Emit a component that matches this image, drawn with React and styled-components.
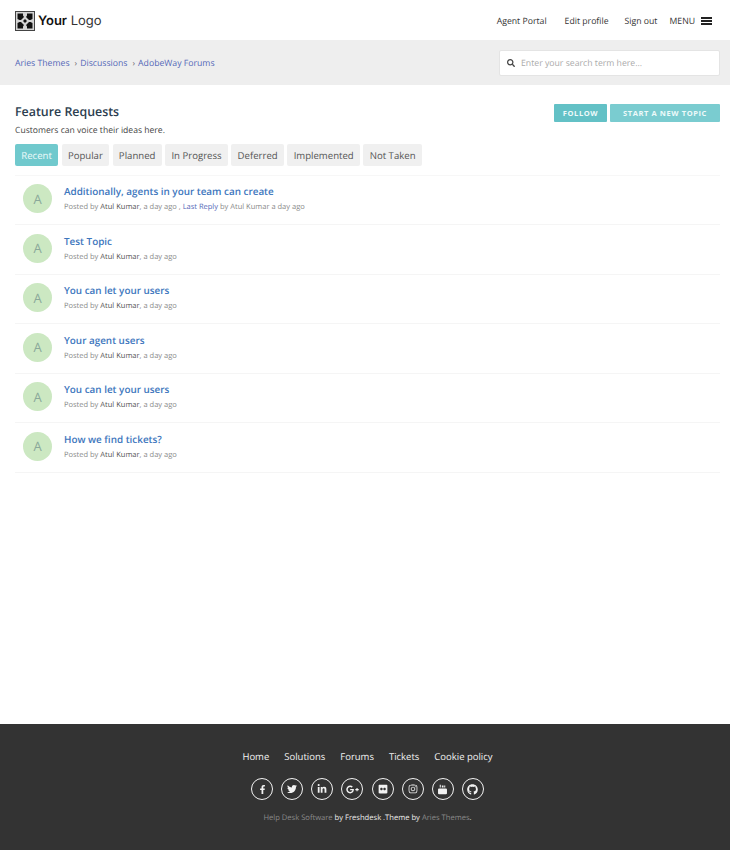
import React from 'react'
import styled, { createGlobalStyle } from 'styled-components'
import { FaFacebookF, FaTwitter, FaLinkedinIn, FaGooglePlusG, FaFlickr, FaInstagram, FaGithub, FaSearch } from 'react-icons/fa'

const GlobalStyle = createGlobalStyle`
  html, body { margin: 0; padding: 0; background: #fff; }
  body { font-family: 'Open Sans', sans-serif; color: #333; text-rendering: geometricPrecision; }
  * { box-sizing: border-box; }
`

const Page = styled.div`
  width: 730px;
  height: 850px;
  display: flex;
  flex-direction: column;
  overflow: hidden;
`

const Header = styled.header`
  height: 40px;
  padding: 1px 18px 0 15px;
  display: flex;
  align-items: center;
  justify-content: space-between;
`

const Logo = styled.div`
  display: flex;
  align-items: center;
  gap: 3px;
  font-family: 'Inter', sans-serif;
  font-size: 13px;
  color: #111;
  b { font-weight: 600; }
  span { color: #333; font-weight: 400; }
`

const Nav = styled.nav`
  display: flex;
  align-items: center;
  font-size: 8.7px;
  color: #333;
`

const NavLink = styled.a`
  margin-right: ${p => p.$gap}px;
`

const Menu = styled.div`
  display: flex;
  align-items: center;
  gap: 6px;
`

const Burger = styled.i`
  display: block;
  width: 11px;
  height: 8px;
  border-top: 2px solid #222;
  border-bottom: 2px solid #222;
  position: relative;
  &::after {
    content: '';
    position: absolute;
    left: 0;
    right: 0;
    top: 1px;
    height: 2px;
    background: #222;
  }
`

const SubBar = styled.div`
  height: 45px;
  background: #eeeeee;
  padding: 0 10px 0 15px;
  display: flex;
  align-items: center;
  justify-content: space-between;
`

const Crumbs = styled.div`
  display: flex;
  font-size: 8.7px;
  color: #5468b8;
`

const Crumb = styled.a`
  & + &::before {
    content: '›';
    margin: 0 3px 0 5px;
    color: #666;
  }
`

const Search = styled.div`
  width: 221px;
  height: 26px;
  background: #fff;
  border: 1px solid #e4e4e4;
  border-radius: 2px;
  display: flex;
  align-items: center;
  gap: 6px;
  padding-left: 7px;
  font-size: 8.7px;
  color: #aaa;
  svg { color: #444; font-size: 8px; }
`

const Main = styled.main`
  flex: 1;
  padding: 18px 10px 0 15px;
`

const TitleRow = styled.div`
  display: flex;
  justify-content: space-between;
  align-items: flex-start;
`

const Title = styled.h1`
  margin: 0;
  font-size: 12.4px;
  line-height: 17px;
  font-weight: 600;
  color: #2c3e50;
`

const Lead = styled.p`
  margin: 4px 0 0;
  font-size: 8.6px;
  line-height: 13px;
  color: #444;
`

const Actions = styled.div`
  display: flex;
  gap: 3px;
  margin-top: 1px;
`

const ActionButton = styled.button`
  height: 18px;
  width: ${p => p.$width}px;
  border: 0;
  padding: 0;
  border-radius: 1px;
  background: ${p => p.$muted ? '#7accd0' : '#63c1c6'};
  color: #eefafa;
  font-family: inherit;
  font-size: 7.5px;
  font-weight: 700;
  letter-spacing: 0.6px;
`

const Tabs = styled.div`
  display: flex;
  gap: 3.4px;
  margin-top: 7px;
`

const Tab = styled.a`
  height: 22px;
  padding: 0 6.3px;
  display: flex;
  align-items: center;
  border-radius: 2px;
  font-size: 9.6px;
  background: ${p => p.$active ? '#70c9cd' : '#f0f0f0'};
  color: ${p => p.$active ? '#eefafa' : '#555'};
`

const TopicList = styled.ul`
  list-style: none;
  margin: 8.6px 0 0;
  padding: 0;
  border-top: 1px solid #f7f7f7;
`

const Topic = styled.li`
  height: 49.5px;
  padding: 0 0 2px 8px;
  display: flex;
  align-items: center;
  gap: 12px;
  border-bottom: 1px solid #f5f5f5;
`

const Avatar = styled.div`
  width: 29px;
  height: 29px;
  border-radius: 50%;
  background: #cce8c2;
  color: #8aa89a;
  font-size: 13px;
  display: flex;
  align-items: center;
  justify-content: center;
`

const TopicTitle = styled.a`
  display: block;
  font-size: 9.9px;
  line-height: 14px;
  font-weight: 600;
  color: #3d76bd;
`

const Meta = styled.div`
  margin-top: 4px;
  font-size: 7.5px;
  line-height: 11px;
  color: #8a8a8a;
  b { font-weight: 400; color: #555; }
  a { color: #5468b8; }
`

const Footer = styled.footer`
  height: 126px;
  background: #333333;
  display: flex;
  flex-direction: column;
  align-items: center;
  padding: 25px 0 0 5px;
`

const FooterNav = styled.div`
  display: flex;
  gap: 15px;
  font-size: 9.5px;
  line-height: 15px;
  color: #f2f2f2;
`

const Socials = styled.div`
  display: flex;
  gap: 8.1px;
  margin-top: 14px;
`

const Social = styled.a`
  width: 22px;
  height: 22px;
  border: 1.5px solid #f2f2f2;
  border-radius: 50%;
  display: flex;
  align-items: center;
  justify-content: center;
  color: #f2f2f2;
  font-size: ${p => p.$size}px;
`

const Credit = styled.div`
  margin-top: 13px;
  font-size: 7.6px;
  line-height: 11px;
  color: #eee;
  span { color: #8a8a8a; }
`

const LogoMark = () => (
  <svg width="20" height="20" viewBox="0 0 20 20">
    <rect x="0.5" y="0.5" width="19" height="19" fill="#d4d4d4" stroke="#444" />
    <path d="M2.500 2.500h5.500v2l1 1.500-3 3H4.500l-2-1zM17.500 2.500H12v2l-1 1.500 3 3h1.500l2-1zM2.500 17.500H8v-2l1-1.500-3-3H4.500l-2 1zM17.500 17.500H12v-2l-1-1.500 3-3h1.500l2 1z" fill="#111" />
    <path d="M10 8l2 2-2 2-2-2z" fill="#111" />
  </svg>
)

// the old stacked "You / Tube" mark, not in the icon packages
const YoutubeMark = () => (
  <svg width="11" height="11" viewBox="0 0 16 16" fill="currentColor">
    <path d="M4 1h1.500v4H4zM7 2h2.500v3H7zM10.500 2H12v3h-1.500z" />
    <path d="M3 6.500h10a1.500 1.500 0 0 1 1.500 1.500v5.500A1.500 1.500 0 0 1 13 15H3a1.500 1.500 0 0 1-1.500-1.500V8A1.500 1.500 0 0 1 3 6.500z" />
  </svg>
)

const tabs = ['Recent', 'Popular', 'Planned', 'In Progress', 'Deferred', 'Implemented', 'Not Taken']
const topics = [
  { title: 'Additionally, agents in your team can create', reply: true },
  { title: 'Test Topic' },
  { title: 'You can let your users' },
  { title: 'Your agent users' },
  { title: 'You can let your users' },
  { title: 'How we find tickets?' },
]
const socials = [
  [FaFacebookF, 9],
  [FaTwitter, 10],
  [FaLinkedinIn, 10],
  [FaGooglePlusG, 13],
  [FaFlickr, 10],
  [FaInstagram, 10],
  [YoutubeMark, 10],
  [FaGithub, 11],
]

export default function App() {
  return (
    <Page>
      <GlobalStyle />
      <Header>
        <Logo>
          <LogoMark />
          <div><b>Your</b> <span>Logo</span></div>
        </Logo>
        <Nav>
          <NavLink $gap={18}>Agent Portal</NavLink>
          <NavLink $gap={16}>Edit profile</NavLink>
          <NavLink $gap={12}>Sign out</NavLink>
          <Menu>MENU <Burger /></Menu>
        </Nav>
      </Header>
      <SubBar>
        <Crumbs>
          <Crumb>Aries Themes</Crumb>
          <Crumb>Discussions</Crumb>
          <Crumb>AdobeWay Forums</Crumb>
        </Crumbs>
        <Search>
          <FaSearch />
          Enter your search term here...
        </Search>
      </SubBar>
      <Main>
        <TitleRow>
          <div>
            <Title>Feature Requests</Title>
            <Lead>Customers can voice their ideas here.</Lead>
          </div>
          <Actions>
            <ActionButton $width={53}>FOLLOW</ActionButton>
            <ActionButton $width={110} $muted>START A NEW TOPIC</ActionButton>
          </Actions>
        </TitleRow>
        <Tabs>
          {tabs.map((t, i) => <Tab key={t} $active={i === 0}>{t}</Tab>)}
        </Tabs>
        <TopicList>
          {topics.map((t, i) => (
            <Topic key={i}>
              <Avatar>A</Avatar>
              <div>
                <TopicTitle>{t.title}</TopicTitle>
                <Meta>
                  Posted by <b>Atul Kumar</b>, a day ago
                  {t.reply && <> , <a>Last Reply</a> by Atul Kumar a day ago</>}
                </Meta>
              </div>
            </Topic>
          ))}
        </TopicList>
      </Main>
      <Footer>
        <FooterNav>
          <a>Home</a><a>Solutions</a><a>Forums</a><a>Tickets</a><a>Cookie policy</a>
        </FooterNav>
        <Socials>
          {socials.map(([Icon, size], i) => <Social key={i} $size={size}><Icon /></Social>)}
        </Socials>
        <Credit><span>Help Desk Software</span> by Freshdesk .Theme by <span>Aries Themes</span>.</Credit>
      </Footer>
    </Page>
  )
}
